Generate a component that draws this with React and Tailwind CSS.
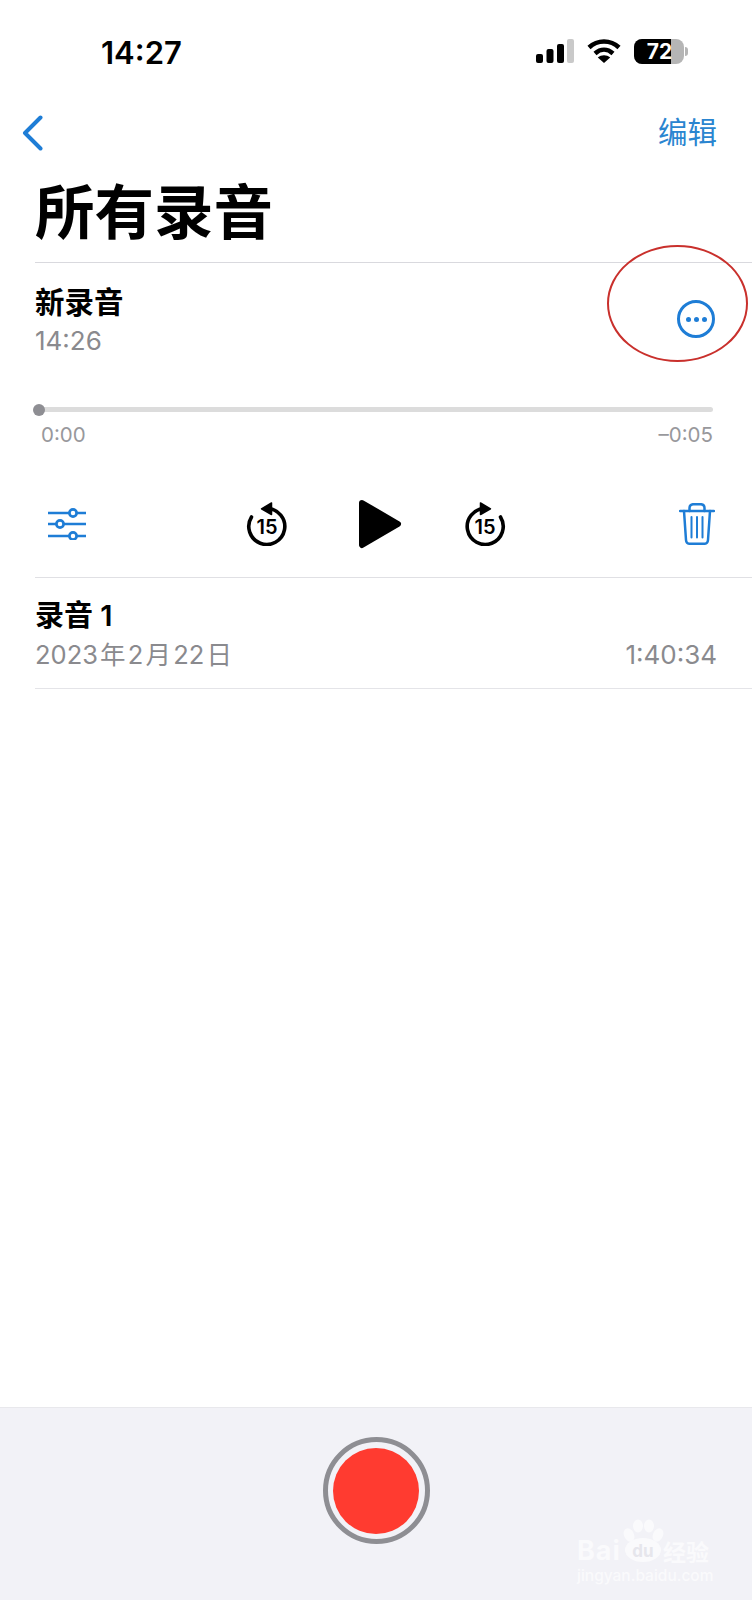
const latin = 'font-["Inter","Noto_Sans_CJK_SC",sans-serif]';

const SignalIcon = () => (
  <svg width="38" height="24" viewBox="0 0 38 24">
    <rect x="0" y="15" width="7" height="9" rx="2" fill="#000" />
    <rect x="10.500" y="10" width="7" height="14" rx="2" fill="#000" />
    <rect x="21" y="5" width="7" height="19" rx="2" fill="#000" />
    <rect x="31" y="0" width="7" height="24" rx="2" fill="#c9c9c9" />
  </svg>
);

const WifiIcon = () => (
  <svg width="34" height="24" viewBox="0 0 34 24" fill="none" stroke="#000" strokeWidth="4.500">
    <path d="M2 8.500C10.500 0.500 23.500 0.500 32 8.500" />
    <path d="M8 14.500C13.500 9.500 20.500 9.500 26 14.500" />
    <path d="M17 24L10.800 18.500C14.500 15.500 19.500 15.500 23.200 18.500Z" fill="#000" stroke="none" />
  </svg>
);

const Battery = () => (
  <div className="flex items-center">
    <div className="relative flex w-[50px] h-[25px] rounded-[8px] overflow-hidden bg-[#b5b5b5]">
      <div className="w-[37px] bg-black" />
      <span className={`absolute inset-0 flex items-center justify-center pl-[1px] text-white text-[21px] leading-[25px] font-bold ${latin}`}>72</span>
    </div>
    <div className="w-[3px] h-[9px] ml-[1px] rounded-r-full bg-[#b5b5b5]" />
  </div>
);

const SkipIcon = ({ forward }) => (
  <svg width="42" height="44" viewBox="0 0 42 44" fill="none">
    <g transform={forward ? 'translate(42 0) scale(-1 1)' : undefined}>
      <path d="M21 6.500A18 18 0 1 1 5.500 15" stroke="#000" strokeWidth="3.600" strokeLinecap="round" />
      <path d="M15.500 6.800L25.500 1V12.500Z" fill="#000" stroke="#000" strokeWidth="1.500" strokeLinejoin="round" />
    </g>
    <text x="21" y="32" textAnchor="middle" fontSize="20" fontWeight="600" fill="#000" fontFamily="Inter, sans-serif">15</text>
  </svg>
);

const SlidersIcon = () => (
  <svg width="38" height="32" viewBox="0 0 38 32" fill="none" stroke="#1e7dd6" strokeWidth="2.700">
    <path d="M0 5H38M0 16H38M0 28H38" strokeLinecap="round" />
    <circle cx="25" cy="5" r="3.600" fill="#fff" />
    <circle cx="12" cy="16" r="3.600" fill="#fff" />
    <circle cx="25" cy="28" r="3.600" fill="#fff" />
  </svg>
);

const TrashIcon = () => (
  <svg width="36" height="42" viewBox="0 0 36 42" fill="none" stroke="#1e7dd6" strokeWidth="2.500" strokeLinecap="round" strokeLinejoin="round">
    <path d="M1 8H35" />
    <path d="M10.500 8V5C10.500 2.500 12 1.200 14.500 1.200H21.500C24 1.200 25.500 2.500 25.500 5V8" />
    <path d="M5 8L7 37C7.200 39.500 8.500 40.800 11 40.800H25C27.500 40.800 28.800 39.500 29 37L31 8" />
    <path d="M12.500 14V34.500M18 14V34.500M23.500 14V34.500" strokeWidth="2" />
  </svg>
);

const Watermark = () => (
  <div className="absolute left-[577px] top-[1519px] w-[134px] flex flex-col">
    <svg width="42" height="44" viewBox="0 0 42 44" fill="#fafafc" className="absolute left-[45px] top-0">
      <ellipse cx="7" cy="16" rx="5" ry="7" transform="rotate(-25 7 16)" />
      <ellipse cx="16" cy="7" rx="5" ry="6.500" />
      <ellipse cx="27" cy="7" rx="5" ry="6.500" />
      <ellipse cx="36" cy="16" rx="5" ry="7" transform="rotate(25 36 16)" />
      <ellipse cx="21" cy="31" rx="18" ry="12" />
    </svg>
    <div className={`relative mt-[19px] w-full h-[26px] flex items-center text-[#fafafc] ${latin}`}>
      <span className="w-[46px] text-[27px] leading-[26px] font-bold tracking-[1px]">Bai</span>
      <span className="w-[40px] text-center text-[17px] leading-[26px] font-bold text-[#e6e6ec]">du</span>
      <span className="font-['Noto_Sans_CJK_SC',sans-serif] text-[23px] leading-[26px] font-bold">经验</span>
    </div>
    <div className={`relative mt-[3px] w-full text-[15.500px] leading-[18px] font-medium text-[#fafafc] ${latin}`}>jingyan.baidu.com</div>
  </div>
);

export default function App() {
  return (
    <div className={`relative w-[752px] h-[1600px] flex flex-col overflow-hidden bg-white text-black ${latin}`}>
      <div className="h-[102px] shrink-0 flex items-center justify-between pl-[101px] pr-[64px]">
        <span className="pt-[2px] text-[31px] leading-none font-semibold">14:27</span>
        <div className="flex items-center gap-[13px]">
          <SignalIcon />
          <WifiIcon />
          <Battery />
        </div>
      </div>

      <div className="h-[62px] shrink-0 flex items-center justify-between pl-[22px] pr-[35px]">
        <svg width="21" height="36" viewBox="0 0 21 36" fill="none" stroke="#1e7dd6" strokeWidth="4" strokeLinecap="round" strokeLinejoin="round">
          <path d="M18.500 2.500L3 18L18.500 33.500" />
        </svg>
        <span className="text-[29.500px] leading-none text-[#2a85d0]">编辑</span>
      </div>

      <div className="ml-[35px] h-[99px] shrink-0 flex items-center border-b border-[#d9d9de]">
        <h1 className="text-[59.500px] leading-none font-bold">所有录音</h1>
      </div>

      <div className="ml-[35px] h-[315px] shrink-0 flex flex-col border-b border-[#e0e0e4]">
        <div className="flex items-start justify-between pr-[35px]">
          <div className="pt-[19px]">
            <div className="text-[29.500px] leading-[40px] font-semibold">新录音</div>
            <div className="text-[26px] leading-[38px] text-[#8a8a8e]">14:26</div>
          </div>
          <div className="mt-[37px] mr-[2px] w-[38px] h-[38px] rounded-full border-[3px] border-[#1e7dd6] flex items-center justify-center gap-[3px]">
            <span className="w-[5px] h-[5px] rounded-full bg-[#1e7dd6]" />
            <span className="w-[5px] h-[5px] rounded-full bg-[#1e7dd6]" />
            <span className="w-[5px] h-[5px] rounded-full bg-[#1e7dd6]" />
          </div>
        </div>

        <div className="relative mt-[47px] mr-[39px] h-[5px] rounded-full bg-[#dcdcdc]">
          <div className="absolute -left-[2px] -top-[3.500px] w-[12px] h-[12px] rounded-full bg-[#8e8e93]" />
        </div>
        <div className="mt-[10px] pl-[6px] pr-[39px] flex justify-between text-[20.500px] leading-[26px] text-[#98989c]">
          <span>0:00</span>
          <span>–0:05</span>
        </div>

        <div className="relative mt-[50px] h-[52px] pl-[13px] pr-[37px] flex items-center justify-between">
          <SlidersIcon />
          <TrashIcon />
          <div className="absolute left-[211px] top-[1px] w-[260px] h-[50px] flex items-center justify-between">
            <SkipIcon />
            <svg width="44" height="50" viewBox="0 0 44 50" className="ml-[7px]">
              <path d="M4 4L40 25L4 46Z" fill="#000" stroke="#000" strokeWidth="6" strokeLinejoin="round" />
            </svg>
            <SkipIcon forward />
          </div>
        </div>
      </div>

      <div className="ml-[35px] h-[111px] shrink-0 pt-[18px] border-b border-[#e4e4e8]">
        <div className="text-[29px] leading-[40px] font-semibold">录音 1</div>
        <div className="flex justify-between pr-[35px] text-[26px] leading-[38px] text-[#8a8a8e]">
          <span className="text-[25.500px] [word-spacing:-5px]">2023 年 2 月 22 日</span>
          <span>1:40:34</span>
        </div>
      </div>

      <div className="flex-1" />

      <div className="h-[193px] shrink-0 flex justify-center border-t border-[#e8e8ec] bg-[#f2f2f7]">
        <div className="mt-[29px] w-[107px] h-[107px] rounded-full border-[5px] border-[#8e8e93] flex items-center justify-center">
          <div className="w-[86px] h-[86px] rounded-full bg-[#ff3b30]" />
        </div>
      </div>

      {/* red hand-drawn circle on top of the screenshot */}
      <div className="absolute left-[607px] top-[245px] w-[141px] h-[117px] rounded-[50%] border-2 border-[#c9302c]" />
      <Watermark />
    </div>
  );
}
